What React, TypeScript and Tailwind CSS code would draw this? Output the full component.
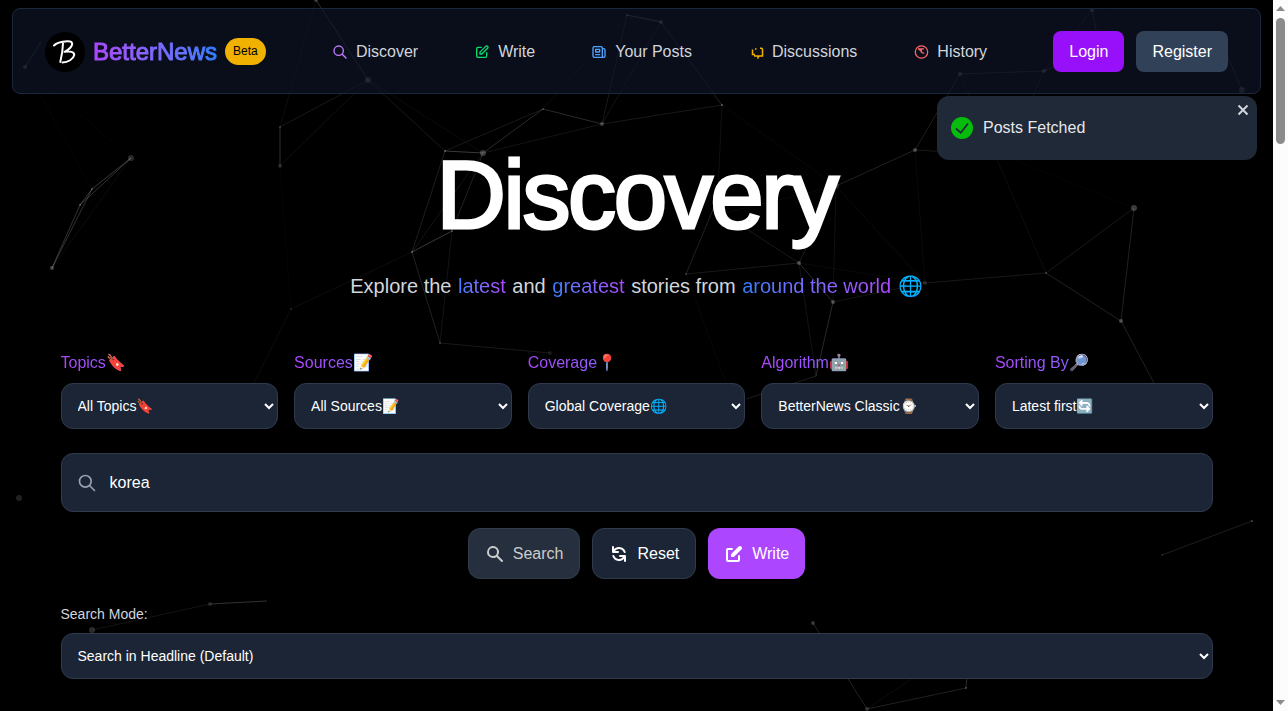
import React, { useState } from 'react';
import {
  HiOutlineSearch,
  HiOutlinePencilAlt,
  HiOutlineNewspaper,
  HiSearch,
  HiRefresh,
  HiPencilAlt,
} from 'react-icons/hi';

interface Filter {
  id: string;
  label: string;
  emoji: string;
  options: string[];
}

const filters: Filter[] = [
  { id: 'topics', label: 'Topics', emoji: '🔖', options: ['All Topics🔖'] },
  { id: 'sources', label: 'Sources', emoji: '📝', options: ['All Sources📝'] },
  { id: 'coverage', label: 'Coverage', emoji: '📍', options: ['Global Coverage🌐'] },
  { id: 'algorithm', label: 'Algorithm', emoji: '🤖', options: ['BetterNews Classic⌚'] },
  { id: 'sorting', label: 'Sorting By', emoji: '🔎', options: ['Latest first🔄'] },
];

// x, y, radius, opacity
const dots: [number, number, number, number][] = [
  [316, 0, 2, 0.3], [368, 80, 3, 0.3], [280, 127, 1, 0.3], [280, 166, 2, 0.2],
  [412, 252, 1, 0.5], [445, 151, 1, 0.5], [483, 153, 3, 0.35], [543, 109, 1, 0.3],
  [602, 124, 2, 0.35], [627, 15, 1, 0.4], [661, 22, 2, 0.3], [722, 105, 1, 0.5],
  [25, 67, 2, 0.3], [131, 158, 3, 0.25], [92, 189, 1, 0.4], [80, 205, 1, 0.4],
  [52, 268, 2, 0.4], [291, 309, 1, 0.2], [440, 343, 1, 0.3], [452, 231, 1, 0.4],
  [550, 353, 2, 0.15], [686, 274, 1, 0.3], [836, 186, 3, 0.2], [799, 263, 2, 0.4],
  [833, 302, 2, 0.4], [915, 150, 2, 0.4], [925, 283, 2, 0.2], [960, 74, 2, 0.3],
  [1044, 71, 2, 0.3], [1092, 10, 2, 0.3], [1242, 90, 3, 0.25], [1134, 208, 3, 0.35],
  [1121, 321, 2, 0.4], [1046, 273, 1, 0.3], [19, 498, 3, 0.2], [92, 630, 3, 0.25],
  [210, 604, 2, 0.2], [813, 623, 2, 0.3], [867, 709, 2, 0.25], [966, 688, 1, 0.4],
  [1162, 555, 1, 0.2], [1252, 521, 1, 0.4],
];

// x1, y1, x2, y2, opacity
const links: [number, number, number, number, number][] = [
  [316, 0, 368, 80, 0.25], [316, 0, 280, 127, 0.08], [368, 80, 280, 127, 0.15],
  [368, 80, 280, 166, 0.1], [280, 127, 280, 166, 0.3], [368, 80, 445, 151, 0.15],
  [368, 80, 483, 153, 0.07], [280, 166, 291, 309, 0.04], [291, 309, 412, 252, 0.08],
  [291, 309, 254, 383, 0.08], [445, 151, 412, 252, 0.18], [483, 153, 412, 252, 0.12],
  [412, 252, 452, 231, 0.35], [412, 252, 440, 343, 0.2], [452, 231, 440, 343, 0.12],
  [483, 153, 452, 231, 0.2], [445, 151, 483, 153, 0.35], [445, 151, 543, 109, 0.15],
  [483, 153, 543, 109, 0.25], [543, 109, 602, 124, 0.25], [483, 153, 602, 124, 0.12],
  [543, 109, 627, 15, 0.08], [602, 124, 627, 15, 0.15], [602, 124, 661, 22, 0.12],
  [627, 15, 661, 22, 0.35], [661, 22, 722, 105, 0.18], [602, 124, 722, 105, 0.15],
  [627, 15, 722, 105, 0.05], [722, 105, 717, 210, 0.1], [717, 200, 686, 274, 0.2],
  [440, 343, 550, 353, 0.15], [686, 274, 799, 263, 0.15], [717, 210, 799, 263, 0.15],
  [799, 263, 833, 302, 0.25], [799, 263, 836, 186, 0.18], [836, 186, 833, 302, 0.1],
  [836, 186, 717, 215, 0.06], [836, 186, 915, 150, 0.2], [836, 186, 925, 283, 0.07],
  [799, 263, 925, 283, 0.06], [833, 302, 925, 283, 0.12], [833, 302, 816, 376, 0.25],
  [799, 263, 816, 376, 0.12], [816, 376, 746, 399, 0.18], [686, 274, 726, 383, 0.05],
  [915, 150, 960, 74, 0.18], [915, 150, 925, 283, 0.06], [915, 150, 1020, 156, 0.15],
  [960, 74, 1044, 71, 0.18], [960, 74, 1046, 273, 0.08], [1044, 71, 1092, 10, 0.15],
  [1044, 71, 1005, 160, 0.12], [1044, 71, 1092, 50, 0.2], [1092, 10, 1100, 50, 0.2],
  [1092, 10, 1242, 55, 0.04], [1225, 50, 1242, 90, 0.18], [925, 283, 1046, 273, 0.15],
  [1046, 273, 1134, 208, 0.15], [1134, 208, 1121, 321, 0.2], [1046, 273, 1121, 321, 0.2],
  [1121, 321, 1154, 383, 0.2], [1134, 208, 1005, 156, 0.04], [722, 105, 836, 186, 0.05],
  [25, 67, 41, 42, 0.25], [25, 67, 92, 189, 0.04], [25, 67, 131, 158, 0.04],
  [131, 158, 92, 189, 0.35], [131, 158, 80, 205, 0.3], [92, 189, 80, 205, 0.35],
  [92, 189, 52, 268, 0.3], [80, 205, 52, 268, 0.3], [131, 158, 52, 268, 0.08],
  [92, 630, 210, 604, 0.12], [210, 604, 267, 601, 0.3], [813, 623, 867, 709, 0.2],
  [867, 709, 966, 688, 0.2], [867, 709, 940, 660, 0.08], [966, 688, 970, 640, 0.25],
  [1162, 555, 1252, 521, 0.18],
];

const Network: React.FC = () => (
  <svg className="pointer-events-none absolute inset-0 h-full w-full opacity-65" aria-hidden="true">
    {links.map(([x1, y1, x2, y2, o], i) => (
      <line key={i} x1={x1} y1={y1} x2={x2} y2={y2} stroke="#fff" strokeOpacity={o} />
    ))}
    {dots.map(([x, y, r, o], i) => (
      <circle key={i} cx={x} cy={y} r={r} fill="#fff" fillOpacity={o} />
    ))}
  </svg>
);

const Logo: React.FC = () => (
  <svg viewBox="0 0 40 40" className="h-10 w-10 shrink-0" aria-hidden="true">
    <circle cx="20" cy="20" r="20" fill="#000" />
    <g fill="none" stroke="#fff" strokeWidth="2" strokeLinecap="round" strokeLinejoin="round">
      <path d="M9 13.500C11 11.200 17 9.500 22.500 9.200C27.500 9 28.500 12 25.500 15.500C24 17.200 22 18.700 19.500 19.800C25 18.800 29.800 19.800 29.200 23.200C28.500 27 23 30.500 17.500 30.500" />
      <path d="M18 11.500C17.800 18 16.500 25 15.300 30" />
    </g>
  </svg>
);

const DiscussIcon: React.FC = () => (
  <svg viewBox="0 0 16 16" className="h-4 w-4 text-yellow-500" fill="none" stroke="currentColor" strokeWidth="1.500" aria-hidden="true">
    <path d="M4.500 5.500V10.500H7M6 12H10V14.800M9.500 13.500L11.500 12H14.500V5.500C14.500 4.700 14 4.300 13.300 4.300H12M8.500 5H7" />
  </svg>
);

const HistoryIcon: React.FC = () => (
  <svg viewBox="0 0 16 16" className="h-4 w-4 text-red-400" fill="none" stroke="currentColor" strokeWidth="1.300" aria-hidden="true">
    <circle cx="8.500" cy="8" r="6.200" />
    <path d="M5 4.800H11M8.300 4.800V8.200L11.200 9.500M5.500 5L8 7" />
  </svg>
);

const navItems = [
  { label: 'Discover', icon: <HiOutlineSearch className="h-4 w-4 text-purple-400" /> },
  { label: 'Write', icon: <HiOutlinePencilAlt className="h-4 w-4 text-green-400" /> },
  { label: 'Your Posts', icon: <HiOutlineNewspaper className="h-4 w-4 text-blue-400" /> },
  { label: 'Discussions', icon: <DiscussIcon /> },
  { label: 'History', icon: <HistoryIcon /> },
];

const selectClass =
  'h-[46px] w-full rounded-xl border border-[#2f3b4d] bg-[#1b2536] px-3 text-sm text-white';

const Header: React.FC = () => (
  <header className="relative mx-3 mt-2 flex items-center justify-between rounded-lg border border-[#1b283b] bg-slate-900/60 px-8 pt-[22px] pb-[21px]">
    <a href="#" className="flex items-center gap-2">
      <Logo />
      <span className="bg-gradient-to-r from-purple-500 to-blue-500 bg-clip-text text-2xl text-transparent [-webkit-text-stroke:1px_transparent]">
        BetterNews
      </span>
      <span className="rounded-full bg-yellow-500 px-2 py-1 text-xs leading-[19px] text-black">Beta</span>
    </a>
    <nav className="flex items-center gap-6">
      {navItems.map((item) => (
        <a key={item.label} href="#" className="flex items-center gap-2 px-4 text-gray-300">
          {item.icon}
          {item.label}
        </a>
      ))}
    </nav>
    <div className="flex items-center gap-3">
      <button className="rounded-lg bg-[#9810fa] px-4 py-2 leading-[25px] text-white">Login</button>
      <button className="rounded-lg bg-slate-700 px-4 py-2 leading-[25px] text-white">Register</button>
    </div>
  </header>
);

const Toast: React.FC<{ onClose: () => void }> = ({ onClose }) => (
  <div role="status" className="absolute top-24 right-4 z-10 flex h-16 w-80 items-center gap-2.5 rounded-xl bg-[#1f2937] px-3.5 text-gray-200">
    <svg viewBox="0 0 22 22" className="h-[22px] w-[22px]" aria-hidden="true">
      <circle cx="11" cy="11" r="11" fill="#07bc0c" />
      <path d="M5 11.500L9.800 15.800L17 6.500" fill="none" stroke="#1f2937" strokeWidth="1.800" />
    </svg>
    <span>Posts Fetched</span>
    <button aria-label="Close" onClick={onClose} className="absolute top-2 right-2 text-gray-300">
      <svg viewBox="0 0 12 12" className="h-3 w-3" fill="none" stroke="currentColor" strokeWidth="2" aria-hidden="true">
        <path d="M1.500 1.500L10.500 10.500M10.500 1.500L1.500 10.500" />
      </svg>
    </button>
  </div>
);

const ScrollTrack: React.FC = () => (
  <div className="sticky top-0 flex h-screen w-[15px] shrink-0 flex-col items-center justify-between bg-[#fcfcfc] py-1.5" aria-hidden="true">
    <div className="flex flex-col items-center gap-[7px]">
      <svg viewBox="0 0 9 5" className="h-[5px] w-[9px]">
        <path d="M0 5L4.500 0L9 5Z" fill="#8b8b8b" />
      </svg>
      <div className="h-[126px] w-[9px] rounded-full bg-[#8b8b8b]" />
    </div>
    <svg viewBox="0 0 9 5" className="h-[5px] w-[9px]">
      <path d="M0 0L4.500 5L9 0Z" fill="#8b8b8b" />
    </svg>
  </div>
);

const App: React.FC = () => {
  const [query, setQuery] = useState('korea');
  const [showToast, setShowToast] = useState(true);

  const accent = 'bg-gradient-to-r from-blue-500 to-purple-500 bg-clip-text px-px text-transparent';

  return (
    <div className="flex min-h-screen bg-black font-['Liberation_Sans',Arial,sans-serif]">
      <div className="relative min-w-0 flex-1">
        <Network />
        <Header />
        {showToast && <Toast onClose={() => setShowToast(false)} />}

        <main className="relative mx-auto max-w-6xl pb-8">
          <div className="mt-[53px] text-center">
            <h1 className="text-8xl leading-none tracking-tight text-white [-webkit-text-stroke:3px_white]">
              Discovery
            </h1>
            <p className="mt-[29px] text-xl text-gray-300">
              Explore the <span className={accent}>latest</span> and{' '}
              <span className={accent}>greatest</span> stories from{' '}
              <span className={accent}>around the world</span> 🌐
            </p>
          </div>

          <div className="mt-[51px] grid grid-cols-5 gap-4">
            {filters.map((f) => (
              <div key={f.id}>
                <label htmlFor={f.id} className="mb-2 block bg-gradient-to-r from-purple-500 to-blue-500 bg-clip-text text-transparent">
                  {f.label}
                  <span className="text-white">{f.emoji}</span>
                </label>
                <select id={f.id} className={selectClass}>
                  {f.options.map((o) => (
                    <option key={o}>{o}</option>
                  ))}
                </select>
              </div>
            ))}
          </div>

          <div className="relative mt-6">
            <HiOutlineSearch className="absolute top-5 left-4 h-5 w-5 text-gray-400" />
            <input
              type="text"
              aria-label="Search posts"
              value={query}
              onChange={(e) => setQuery(e.target.value)}
              className="block w-full rounded-xl border border-[#2f3b4d] bg-[#1b2536] py-4 pr-4 pl-12 leading-[25px] text-white"
            />
          </div>

          <div className="mt-4 flex justify-center gap-3 leading-[25px]">
            <button className="flex items-center gap-2 rounded-xl border border-[#323d4c] bg-[#252f3e] px-4 py-3 text-[#cccccc]">
              <HiSearch className="h-5 w-5" />
              Search
            </button>
            <button className="flex items-center gap-2 rounded-xl border border-[#2f3b4d] bg-[#1b2536] px-4 py-3 text-white">
              <HiRefresh className="h-5 w-5" />
              Reset
            </button>
            <button className="flex items-center gap-2 rounded-xl bg-purple-500 px-4 py-3 text-white">
              <HiPencilAlt className="h-5 w-5" />
              Write
            </button>
          </div>

          <div className="mt-6">
            <label htmlFor="mode" className="mb-2 block text-sm leading-[22px] text-gray-300">
              Search Mode:
            </label>
            <select id="mode" className={selectClass}>
              <option>Search in Headline (Default)</option>
            </select>
          </div>
        </main>
      </div>
      <ScrollTrack />
    </div>
  );
};

export default App;
